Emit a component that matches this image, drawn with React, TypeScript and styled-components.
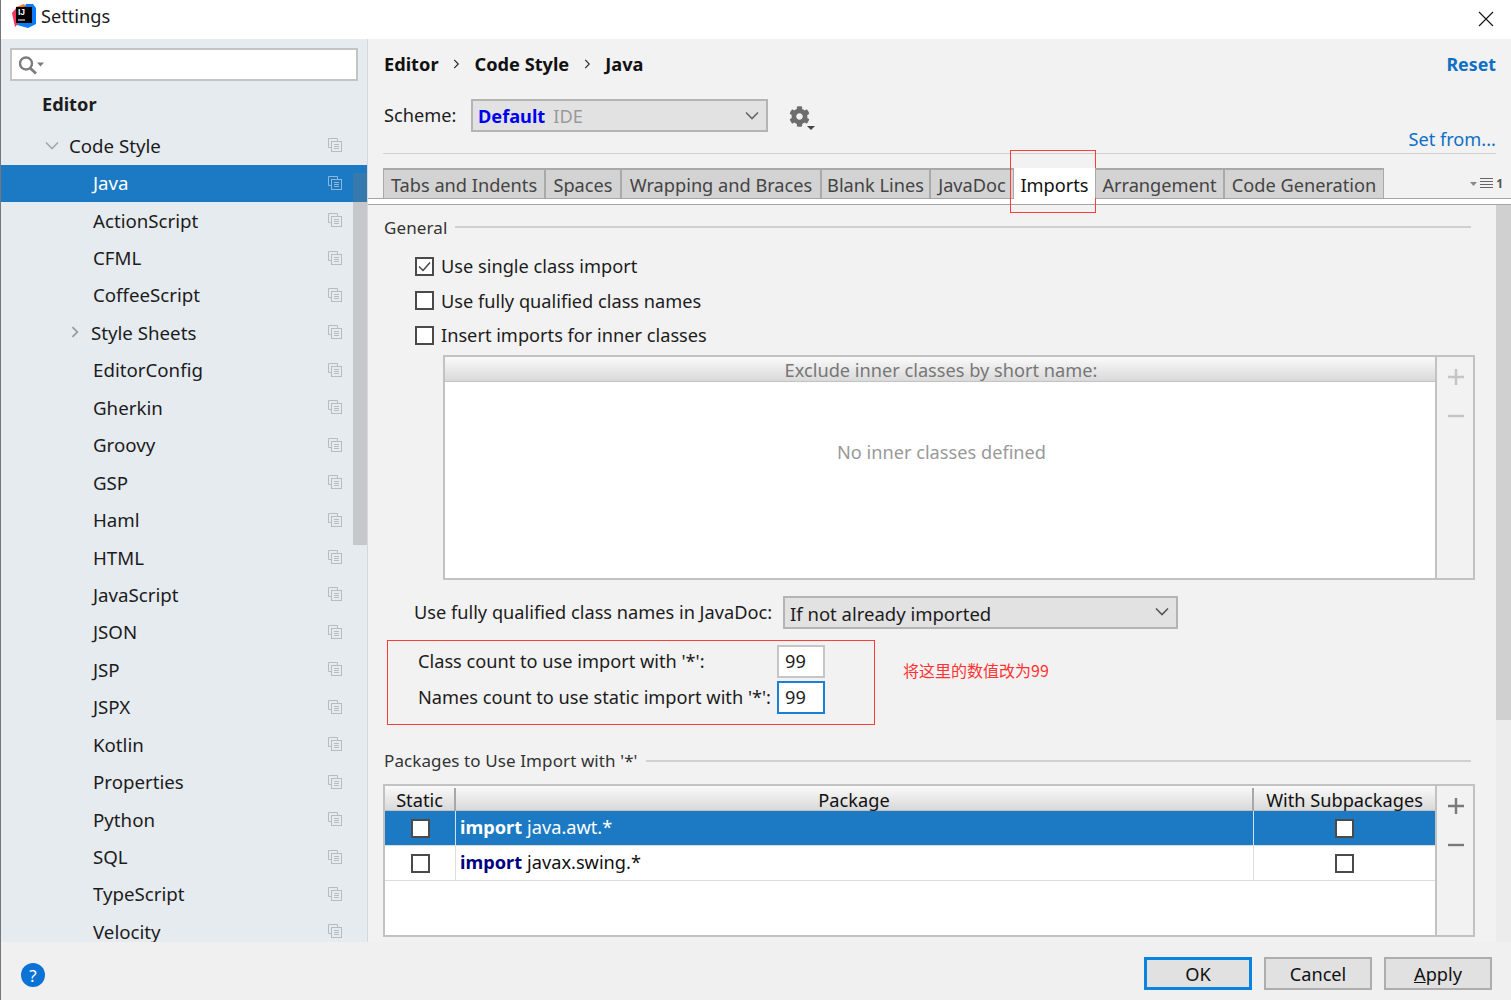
import React from 'react';
import styled, { createGlobalStyle } from 'styled-components';
import { FaCog } from 'react-icons/fa';

const GlobalStyle = createGlobalStyle`
    html, body {
        margin: 0;
        padding: 0;
        background: #f2f2f2;
    }
    * {
        box-sizing: border-box;
    }
`

const Window = styled.div`
    width: 1511px;
    height: 1000px;
    display: flex;
    flex-direction: column;
    overflow: hidden;
    border-left: 1px solid #777;
    font-family: "Noto Sans", "Noto Sans CJK SC", sans-serif;
    font-size: 18.2px;
    color: #1c1c1c;
`
const TitleBar = styled.div`
    height: 39px;
    flex: none;
    background: #fff;
    display: flex;
    align-items: flex-start;
    padding: 4px 17px 0 11px;
    gap: 4px;
`
const TitleText = styled.span`
    line-height: 25px;
`
const CloseBtn = styled.div`
    margin-left: auto;
    margin-top: 4px;
    height: 16px;
`
const Body = styled.div`
    flex: 1;
    min-height: 0;
    display: flex;
`
const Sidebar = styled.div`
    width: 367px;
    flex: none;
    position: relative;
    background: #e6ebf0;
    overflow: hidden;
    border-right: 1px solid #d8d8d8;
    padding-top: 9px;
`
const SearchBox = styled.div`
    height: 33px;
    margin: 0 9px;
    background: #fff;
    border: 2px solid #c4c4c4;
    display: flex;
    align-items: center;
    padding-left: 7px;
`
const GroupTitle = styled.div`
    height: 46.5px;
    padding-left: 41px;
    display: flex;
    align-items: center;
    font-weight: 700;
`
const TreeRow = styled.div<{ $selected?: boolean; $indent: number }>`
    height: 37.45px;
    display: flex;
    align-items: center;
    padding-left: ${p => p.$indent}px;
    padding-right: 25px;
    padding-bottom: 2px;
    font-size: 18.7px;
    background: ${p => (p.$selected ? '#1b7ac3' : 'transparent')};
    color: ${p => (p.$selected ? '#fff' : '#1c1c1c')};
`
const Arrow = styled.span<{ $w: number }>`
    width: ${p => p.$w}px;
    flex: none;
    display: flex;
    align-items: center;
`
const TreeIcon = styled.span`
    margin-left: auto;
    display: flex;
`
const SideThumb = styled.div`
    position: absolute;
    right: 0;
    top: 134px;
    width: 14px;
    height: 372px;
    background: rgba(120, 120, 120, 0.3);
`
const Main = styled.div`
    flex: 1;
    min-width: 0;
    display: flex;
    flex-direction: column;
    background: #f2f2f2;
`
const Crumbs = styled.div`
    height: 50px;
    flex: none;
    display: flex;
    align-items: center;
    padding: 0 15px 0 16px;
    font-weight: 700;
    color: #111;
`
const CrumbSep = styled.span`
    width: 36px;
    display: flex;
    justify-content: center;
`
const ResetLink = styled.span`
    margin-left: auto;
    font-size: 17.8px;
    color: #0f6fc4;
`
const SchemeRow = styled.div`
    margin-top: 10px;
    height: 54px;
    flex: none;
    display: flex;
    align-items: flex-start;
    padding: 0 15px 0 16px;
`
const SchemeLabel = styled.span`
    width: 87px;
    line-height: 33px;
`
const Dropdown = styled.div<{ $w: number }>`
    width: ${p => p.$w}px;
    height: 33px;
    flex: none;
    background: #e2e2e2;
    border: 2px solid #b4b4b4;
    display: flex;
    align-items: center;
    padding: 0 7px 0 5px;
`
const SchemeName = styled.span`
    color: #0000f0;
    font-weight: 700;
`
const SchemeKind = styled.span`
    color: #9a9a9a;
    margin-left: 8px;
`
const DropArrow = styled.span`
    margin-left: auto;
    display: flex;
`
const Gear = styled.div`
    position: relative;
    margin-left: 21px;
    margin-top: 7px;
    width: 26px;
    height: 24px;
    color: #6d6d6d;
`
const GearCaret = styled.span`
    position: absolute;
    right: 0;
    bottom: 0;
    border-left: 4px solid transparent;
    border-right: 4px solid transparent;
    border-top: 4px solid #444;
`
const SetFrom = styled.span`
    margin-left: auto;
    align-self: flex-end;
    margin-bottom: 1px;
    color: #0f6fc4;
    line-height: 26px;
`
const Divider = styled.div`
    height: 1px;
    flex: none;
    margin: 0 15px;
    background: #d2d2d2;
`
const TabStrip = styled.div`
    margin-top: 14px;
    height: 31px;
    flex: none;
    display: flex;
    align-items: flex-start;
    padding: 0 8px 0 15px;
    border-bottom: 1px solid #a6a6a6;
`
const Tab = styled.div<{ $w: number; $active?: boolean }>`
    position: relative;
    width: ${p => p.$w}px;
    height: ${p => (p.$active ? 31 : 30)}px;
    flex: none;
    display: flex;
    align-items: center;
    justify-content: center;
    padding-top: 1px;
    white-space: nowrap;
    background: ${p => (p.$active ? '#fff' : '#d3d3d3')};
    color: ${p => (p.$active ? '#111' : '#444')};
    border: 2px solid ${p => (p.$active ? 'transparent' : '#a9a9a9')};
    border-bottom: none;
    border-left-width: ${p => (p.$active ? 0 : 1)}px;
    border-right-width: ${p => (p.$active ? 0 : 1)}px;
`
const TabHighlight = styled.div`
    position: absolute;
    left: -4px;
    top: -20px;
    width: 86px;
    height: 63px;
    border: 1px solid #ff3b3b;
`
const TabsMenu = styled.div`
    margin-left: auto;
    height: 30px;
    display: flex;
    align-items: center;
    gap: 2px;
    font-size: 12px;
    font-weight: 700;
    color: #555;
`
const TabBand = styled.div`
    height: 6px;
    flex: none;
    background: #fff;
    border-bottom: 1px solid #a6a6a6;
`
const ContentRow = styled.div`
    flex: 1;
    min-height: 0;
    display: flex;
`
const Content = styled.div`
    flex: 1;
    min-width: 0;
    padding: 11px 21px 0 16px;
`
const Scrollbar = styled.div`
    width: 15px;
    flex: none;
    background: #ececec;
`
const ScrollThumb = styled.div`
    height: 515px;
    background: #d0d0d0;
`
const SectionTitle = styled.div<{ $top?: number }>`
    height: 22px;
    margin-top: ${p => p.$top ?? 0}px;
    margin-right: 4px;
    display: flex;
    align-items: center;
    gap: 8px;
    font-size: 17px;
    letter-spacing: 0.1px;
    color: #333;

    &::after {
        content: '';
        flex: 1;
        height: 2px;
        background: #d0d0d0;
    }
`
const OptionList = styled.div`
    margin-top: 11px;
    padding-left: 31px;
`
const OptionRow = styled.div`
    height: 34.5px;
    display: flex;
    align-items: center;
    gap: 7px;
`
const Check = styled.span`
    width: 19px;
    height: 19px;
    flex: none;
    display: flex;
    align-items: center;
    justify-content: center;
    background: #fff;
    border: 2px solid #4a4a4a;
`
const ListPanel = styled.div<{ $inset: number; $h: number; $top: number }>`
    margin-top: ${p => p.$top}px;
    margin-left: ${p => p.$inset}px;
    height: ${p => p.$h}px;
    display: flex;
    border: 2px solid #c2c2c2;
`
const ListMain = styled.div`
    flex: 1;
    min-width: 0;
    display: flex;
    flex-direction: column;
    background: #fff;
`
const ListHeader = styled.div`
    height: 25px;
    flex: none;
    display: flex;
    align-items: center;
    justify-content: center;
    padding: 2px 0 0 2px;
    background: linear-gradient(#fafafa, #d9d9d9);
    border-bottom: 1px solid #c2c2c2;
    color: #777;
`
const EmptyNote = styled.div`
    flex: 1;
    display: flex;
    align-items: center;
    justify-content: center;
    padding: 0 0 56px 3px;
    color: #999;
`
const ListTools = styled.div`
    width: 38px;
    flex: none;
    background: #f2f2f2;
    border-left: 2px solid #c2c2c2;
    display: flex;
    flex-direction: column;
    align-items: center;
    gap: 23px;
    padding: 12px 0 0 1px;
`
const JavadocRow = styled.div`
    margin-top: 16px;
    height: 33px;
    display: flex;
    align-items: center;
    gap: 8px;
    padding-left: 30px;
`
const JavadocLabel = styled.span`
    width: 361px;
    flex: none;
    white-space: nowrap;
`
const JavadocValue = styled.span`
    font-size: 18.5px;
    margin-top: 2px;
`
const CountRow = styled.div`
    margin-top: 11px;
    margin-left: 3px;
    display: flex;
    align-items: center;
    gap: 28px;
`
const CountBox = styled.div`
    width: 488px;
    height: 85px;
    flex: none;
    border: 1px solid #ff3b3b;
    display: grid;
    grid-template-columns: 1fr 48px;
    grid-auto-rows: 33px;
    column-gap: 3px;
    row-gap: 3px;
    padding: 4px 49px 0 30px;
`
const CountLabel = styled.span`
    align-self: center;
    white-space: nowrap;
`
const NumberBox = styled.div<{ $focus?: boolean }>`
    background: #fff;
    border: ${p => (p.$focus ? '2px solid #1a80d4' : '2px solid #c6c6c6')};
    display: flex;
    align-items: center;
    padding-left: 6px;
`
const Annotation = styled.span`
    color: #f33;
    font-size: 16px;
    padding-bottom: 25px;
    font-family: "Noto Sans CJK SC", "Noto Sans", sans-serif;
`
const PackageHead = styled.div`
    height: 25px;
    flex: none;
    display: grid;
    grid-template-columns: 71px 798px 1fr;
    background: linear-gradient(#fafafa, #d9d9d9);
    border-bottom: 1px solid #c2c2c2;
`
const HeadCell = styled.div<{ $sep?: boolean }>`
    display: flex;
    align-items: center;
    justify-content: center;
    padding-bottom: 4px;
    color: #111;
    border-right: ${p => (p.$sep ? '2px solid #a8a8a8' : 'none')};
    margin: 2px 0 1px;
`
const PackageRow = styled.div<{ $selected?: boolean }>`
    height: 35px;
    flex: none;
    display: grid;
    grid-template-columns: 71px 798px 1fr;
    background: ${p => (p.$selected ? '#1b7ac3' : '#fff')};
    color: ${p => (p.$selected ? '#fff' : '#111')};
    border-bottom: 1px solid #dcdcdc;
`
const PackageCell = styled.div<{ $sep?: boolean; $text?: boolean; $selected?: boolean }>`
    display: flex;
    align-items: center;
    justify-content: ${p => (p.$text ? 'flex-start' : 'center')};
    padding-left: ${p => (p.$text ? 4 : 0)}px;
    padding-bottom: ${p => (p.$text ? 2 : 0)}px;
    border-right: ${p => (p.$sep ? `1px solid ${p.$selected ? '#cfe3f3' : '#dcdcdc'}` : 'none')};

    ${Check} {
        margin-top: 2px;
    }
`
const Keyword = styled.b<{ $selected?: boolean }>`
    color: ${p => (p.$selected ? '#fff' : '#000080')};
    margin-right: 5px;
`
const Footer = styled.div`
    height: 58px;
    flex: none;
    display: flex;
    align-items: flex-start;
    gap: 12px;
    padding: 15px 19px 0 20px;
    background: #f0f0f0;
`
const HelpBtn = styled.div`
    width: 24px;
    height: 24px;
    margin-top: 6px;
    margin-right: auto;
    border-radius: 50%;
    background: #0b73d6;
    color: #fff;
    display: flex;
    align-items: center;
    justify-content: center;
    font-size: 17px;
`
const DialogBtn = styled.div<{ $primary?: boolean }>`
    width: 108px;
    height: 33px;
    display: flex;
    align-items: center;
    justify-content: center;
    color: #111;
    background: #e1e1e1;
    border: ${p => (p.$primary ? '3px solid #0a84e0' : '2px solid #adadad')};
`
const Mnemonic = styled.span`
    text-decoration: underline;
`

const Logo = () => (
    <svg width="25" height="25" viewBox="0 0 25 25">
        <polygon points="0,9 5,3 6,20 3,23" fill="#f5365c" />
        <polygon points="4,3 12,0 15,4 4,5" fill="#f97a12" />
        <polygon points="14,0 21,0 24,4 24,20 16,24 5,21" fill="#087cfa" />
        <rect x="4" y="3" width="16" height="16" fill="#000" />
        <text x="6" y="11" fill="#fff" fontSize="8.5" fontWeight="700" fontFamily="Liberation Sans, sans-serif">IJ</text>
        <rect x="6" y="15.5" width="7" height="1" fill="#fff" />
    </svg>
)

const CloseIcon = () => (
    <svg width="16" height="16" viewBox="0 0 16 16">
        <path d="M1 1 L15 15 M15 1 L1 15" stroke="#111" strokeWidth="1.1" fill="none" />
    </svg>
)

const SearchIcon = () => (
    <svg width="28" height="20" viewBox="0 0 28 20">
        <circle cx="7" cy="8.5" r="6" fill="none" stroke="#7c7c7c" strokeWidth="2.4" />
        <path d="M11 13 L17 18.5" stroke="#7c7c7c" strokeWidth="2.8" />
        <polygon points="18,7.5 25,7.5 21.5,11.5" fill="#7c7c7c" />
    </svg>
)

const CopyIcon = ({ selected }: { selected?: boolean }) => (
    <svg width="14" height="14" viewBox="0 0 14 14" fill="none" stroke={selected ? '#8fb7d8' : '#b6bcc2'} strokeWidth="1">
        <path d="M9.5 3 V0.5 H0.5 V9.5 H3" />
        <rect x="3.5" y="3.5" width="10" height="10" />
        <path d="M6 6.5 H11 M6 8.5 H11 M6 10.5 H11" />
    </svg>
)

const ChevronDown = ({ color, size = 14 }: { color: string; size?: number }) => (
    <svg width={size} height={size * 0.65} viewBox="0 0 14 9">
        <path d="M1 1.5 L7 7.5 L13 1.5" fill="none" stroke={color} strokeWidth="1.6" />
    </svg>
)

const ChevronRight = ({ color, h = 12, sw = 1.8 }: { color: string; h?: number; sw?: number }) => (
    <svg width={h * 0.65} height={h} viewBox="0 0 8 12">
        <path d="M1.5 1 L6.5 6 L1.5 11" fill="none" stroke={color} strokeWidth={sw} />
    </svg>
)

const CheckMark = () => (
    <svg width="13" height="11" viewBox="0 0 13 11">
        <path d="M1 5.5 L5 9.5 L12 1.5" fill="none" stroke="#444" strokeWidth="1.5" />
    </svg>
)

const PlusIcon = ({ color }: { color: string }) => (
    <svg width="16" height="16" viewBox="0 0 16 16">
        <path d="M0 8 H16 M8 0 V16" stroke={color} strokeWidth="2.4" />
    </svg>
)

const MinusIcon = ({ color }: { color: string }) => (
    <svg width="16" height="16" viewBox="0 0 16 16">
        <path d="M0 8 H16" stroke={color} strokeWidth="2.4" />
    </svg>
)

const TabListIcon = () => (
    <svg width="24" height="12" viewBox="0 0 24 12">
        <polygon points="0,5 7,5 3.5,9" fill="#888" />
        <path d="M10 1.5 H23 M10 4.5 H23 M10 7.5 H23 M10 10.5 H23" stroke="#666" strokeWidth="1.2" />
    </svg>
)

const languages = [
    'Java', 'ActionScript', 'CFML', 'CoffeeScript', 'Style Sheets', 'EditorConfig', 'Gherkin', 'Groovy',
    'GSP', 'Haml', 'HTML', 'JavaScript', 'JSON', 'JSP', 'JSPX', 'Kotlin', 'Properties', 'Python', 'SQL',
    'TypeScript', 'Velocity',
];

const tabs = [
    { label: 'Tabs and Indents', w: 162 },
    { label: 'Spaces', w: 76 },
    { label: 'Wrapping and Braces', w: 200 },
    { label: 'Blank Lines', w: 109 },
    { label: 'JavaDoc', w: 84 },
    { label: 'Imports', w: 81, active: true },
    { label: 'Arrangement', w: 129 },
    { label: 'Code Generation', w: 160 },
];

const options = [
    { label: 'Use single class import', checked: true },
    { label: 'Use fully qualified class names' },
    { label: 'Insert imports for inner classes' },
];

const packages = [
    { name: 'java.awt.*', selected: true },
    { name: 'javax.swing.*' },
];

const App: React.FC = () => {
    return (
        <Window>
            <GlobalStyle />
            <TitleBar>
                <Logo />
                <TitleText>Settings</TitleText>
                <CloseBtn><CloseIcon /></CloseBtn>
            </TitleBar>
            <Body>
                <Sidebar>
                    <SearchBox><SearchIcon /></SearchBox>
                    <GroupTitle>Editor</GroupTitle>
                    <TreeRow $indent={44}>
                        <Arrow $w={24}><ChevronDown color="#a4a8ac" /></Arrow>
                        Code Style
                        <TreeIcon><CopyIcon /></TreeIcon>
                    </TreeRow>
                    {languages.map((name, i) => (
                        <TreeRow key={name} $selected={i === 0} $indent={name === 'Style Sheets' ? 70 : 92}>
                            {name === 'Style Sheets' && <Arrow $w={20}><ChevronRight color="#999" /></Arrow>}
                            {name}
                            <TreeIcon><CopyIcon selected={i === 0} /></TreeIcon>
                        </TreeRow>
                    ))}
                    <SideThumb />
                </Sidebar>
                <Main>
                    <Crumbs>
                        Editor
                        <CrumbSep><ChevronRight color="#222" h={10} sw={1.4} /></CrumbSep>
                        Code Style
                        <CrumbSep><ChevronRight color="#222" h={10} sw={1.4} /></CrumbSep>
                        Java
                        <ResetLink>Reset</ResetLink>
                    </Crumbs>
                    <SchemeRow>
                        <SchemeLabel>Scheme:</SchemeLabel>
                        <Dropdown $w={297}>
                            <SchemeName>Default</SchemeName>
                            <SchemeKind>IDE</SchemeKind>
                            <DropArrow><ChevronDown color="#666" /></DropArrow>
                        </Dropdown>
                        <Gear>
                            <FaCog size={21} />
                            <GearCaret />
                        </Gear>
                        <SetFrom>Set from...</SetFrom>
                    </SchemeRow>
                    <Divider />
                    <TabStrip>
                        {tabs.map(t => (
                            <Tab key={t.label} $w={t.w} $active={t.active}>
                                {t.label}
                                {t.active && <TabHighlight />}
                            </Tab>
                        ))}
                        <TabsMenu><TabListIcon />1</TabsMenu>
                    </TabStrip>
                    <TabBand />
                    <ContentRow>
                        <Content>
                            <SectionTitle>General</SectionTitle>
                            <OptionList>
                                {options.map(o => (
                                    <OptionRow key={o.label}>
                                        <Check>{o.checked && <CheckMark />}</Check>
                                        {o.label}
                                    </OptionRow>
                                ))}
                            </OptionList>
                            <ListPanel $inset={59} $h={225} $top={2}>
                                <ListMain>
                                    <ListHeader>Exclude inner classes by short name:</ListHeader>
                                    <EmptyNote>No inner classes defined</EmptyNote>
                                </ListMain>
                                <ListTools>
                                    <PlusIcon color="#c4c4c4" />
                                    <MinusIcon color="#c4c4c4" />
                                </ListTools>
                            </ListPanel>
                            <JavadocRow>
                                <JavadocLabel>Use fully qualified class names in JavaDoc:</JavadocLabel>
                                <Dropdown $w={395}>
                                    <JavadocValue>If not already imported</JavadocValue>
                                    <DropArrow><ChevronDown color="#555" /></DropArrow>
                                </Dropdown>
                            </JavadocRow>
                            <CountRow>
                                <CountBox>
                                    <CountLabel>Class count to use import with '*':</CountLabel>
                                    <NumberBox>99</NumberBox>
                                    <CountLabel>Names count to use static import with '*':</CountLabel>
                                    <NumberBox $focus>99</NumberBox>
                                </CountBox>
                                <Annotation>将这里的数值改为99</Annotation>
                            </CountRow>
                            <SectionTitle $top={25}>Packages to Use Import with '*'</SectionTitle>
                            <ListPanel $inset={-1} $h={153} $top={12}>
                                <ListMain>
                                    <PackageHead>
                                        <HeadCell $sep>Static</HeadCell>
                                        <HeadCell $sep>Package</HeadCell>
                                        <HeadCell>With Subpackages</HeadCell>
                                    </PackageHead>
                                    {packages.map(p => (
                                        <PackageRow key={p.name} $selected={p.selected}>
                                            <PackageCell $sep $selected={p.selected}><Check /></PackageCell>
                                            <PackageCell $sep $text $selected={p.selected}>
                                                <Keyword $selected={p.selected}>import</Keyword>{p.name}
                                            </PackageCell>
                                            <PackageCell><Check /></PackageCell>
                                        </PackageRow>
                                    ))}
                                </ListMain>
                                <ListTools>
                                    <PlusIcon color="#7a7a7a" />
                                    <MinusIcon color="#7a7a7a" />
                                </ListTools>
                            </ListPanel>
                        </Content>
                        <Scrollbar><ScrollThumb /></Scrollbar>
                    </ContentRow>
                </Main>
            </Body>
            <Footer>
                <HelpBtn>?</HelpBtn>
                <DialogBtn $primary>OK</DialogBtn>
                <DialogBtn>Cancel</DialogBtn>
                <DialogBtn><Mnemonic>A</Mnemonic>pply</DialogBtn>
            </Footer>
        </Window>
    );
}

export default App;
